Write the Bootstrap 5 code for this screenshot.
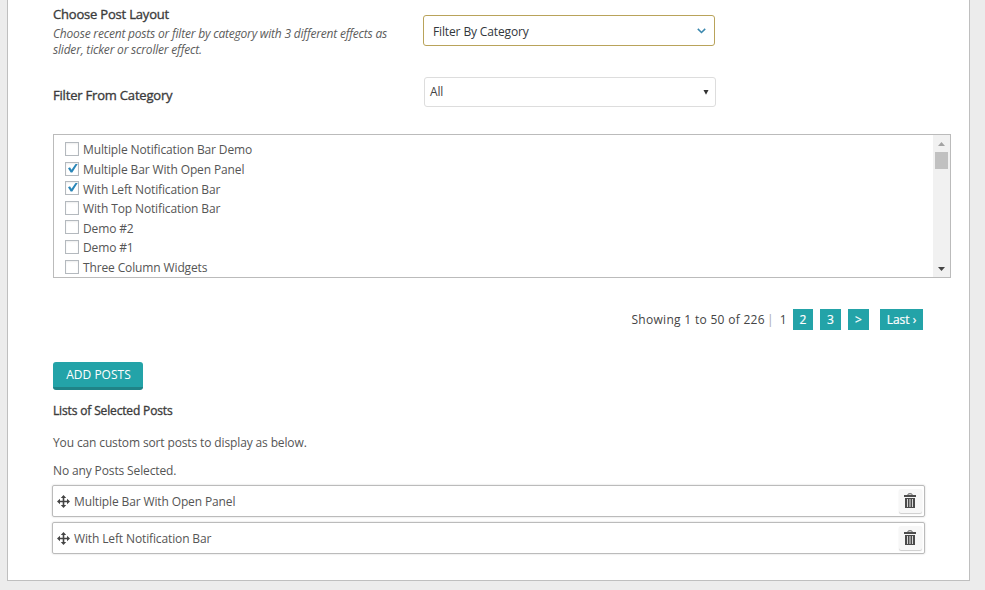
<!DOCTYPE html>
<html lang="en">
<head>
<meta charset="utf-8">
<meta name="viewport" content="width=device-width, initial-scale=1">
<title>Post settings</title>
<link href="https://cdn.jsdelivr.net/npm/bootstrap@5.3.0/dist/css/bootstrap.min.css" rel="stylesheet">
<style>
body{background:#ececec;font-family:"Open Sans",sans-serif;font-size:12px;line-height:20px;letter-spacing:-.13px;color:#555;overflow:hidden}
.panel{width:963px;height:581px;margin-left:7px;background:#fff;border:1px solid #bfbfbf;border-top:0;padding:0 18px 0 45px}
.field{width:370px}
.heading{font-size:13px;line-height:20px;letter-spacing:-.19px;color:#3c3c3c;-webkit-text-stroke:.35px #3c3c3c}
.heading-sm{font-size:12px;letter-spacing:-.15px;margin-top:11px}
.hint{font-size:12px;line-height:16px;letter-spacing:-.2px;font-style:italic;color:#5c5c5c;width:345px;margin-top:2px}
.row-layout{height:77px;padding-top:4px}
.row-filter{height:57px}
.pick{width:292px;border-radius:3px;background:#fff}
.pick-gold{height:31px;margin-top:11px;border:1px solid #b9a35a;padding:0 8px 0 9px;color:#32373c}
.pick-gold span{padding-top:3px}
.pick-grey{height:30px;margin-left:1px;border:1px solid #ddd;padding:0 6px 0 5px;color:#444}
.post-box{width:898px;height:144px;border:1px solid #bbb}
.post-list{padding:5.400px 0 0 11px}
.post-item{height:19.6px;line-height:19.6px}
.tick{width:14px;height:14px;margin:1.600px 4px 0 0;border:1px solid #b4b9be;box-shadow:inset 0 1px 2px rgba(0,0,0,.07)}
.scroller{width:17px;background:#f1f1f1;padding:7px 0 6px}
.thumb{width:13px;height:17px;background:#c1c1c1;margin-top:6px}
.pager{height:21px;margin-top:31px;padding-right:28px;line-height:21px;color:#444;letter-spacing:.3px}
.sep{margin-left:2px;color:#aaa}
.now{margin:0 6px}
.pg{width:21px;margin-right:7px;background:#23a3a8;color:#fff;text-align:center;letter-spacing:0;-webkit-text-stroke:.2px #fff}
.pg-two{width:20px}
.pg-next{margin-right:11px}
.pg-last{width:43px;margin-right:0}
.add{height:28px;width:90px;margin-top:32px;padding:0 0 0 1px;border:0;border-bottom:3px solid #1f8387;border-radius:3px;background:#23a3a8;color:#fff;font-size:12px;line-height:24px}
.note{margin-top:12px}
.empty-note{margin:8px 0 4px}
.sorted{width:873px;height:32px;margin:0 0 5px -1px;border:1px solid #bbb;border-radius:2px;box-shadow:0 0 2px rgba(0,0,0,.2);padding:0 2px 0 4px}
.sorted-name{padding-top:2px}
.bin{width:23px;height:24px;padding:0 1px 1px 0;background:#f7f7f7;border-radius:2px;box-shadow:0 1px 1px #ccc}
</style>
<script src="https://cdn.jsdelivr.net/npm/bootstrap@5.3.0/dist/js/bootstrap.bundle.min.js"></script>
</head>
<body>
<svg class="d-none">
  <symbol id="check" viewBox="0 0 12 12"><path d="M2 5.200 4 4.300 5.500 6.800 9.500 1 11.700 1 6.300 9.500H4.700Z" fill="#2a86b8"/></symbol>
  <symbol id="move" viewBox="0 0 13 13"><path d="M6.500 0 9.200 3H7.300V5.700H10V3.800L13 6.500 10 9.200V7.300H7.300V10H9.200L6.500 13 3.800 10H5.700V7.300H3V9.200L0 6.500 3 3.800V5.700H5.700V3H3.800Z" fill="#444"/></symbol>
  <symbol id="trash" viewBox="0 0 12 15"><path d="M4 2V1.500Q4 .8 4.700 .8H7.300Q8 .8 8 1.500V2" fill="none" stroke="#555"/><path d="M0 2H12V4H0Z" fill="#4c4c4c"/><path d="M1 5H11V15H1Z" fill="#4a4a4a"/><path d="M3.500 6V14M8.500 6V14" stroke="#d8d8d8"/><path d="M6 6V14" stroke="#999" stroke-width="2"/></symbol>
</svg>
<main class="panel">
  <div class="row-layout d-flex">
    <div class="field">
      <div class="heading">Choose Post Layout</div>
      <div class="hint">Choose recent posts or filter by category with 3 different effects as slider, ticker or scroller effect.</div>
    </div>
    <div class="pick pick-gold d-flex align-items-center justify-content-between">
      <span>Filter By Category</span>
      <svg width="9" height="6" viewBox="0 0 9 6"><path d="M.8 .9 4.500 4.500 8.200 .9" fill="none" stroke="#3a87ad" stroke-width="1.500"/></svg>
    </div>
  </div>
  <div class="row-filter d-flex">
    <div class="field"><div class="heading mt-2">Filter From Category</div></div>
    <div class="pick pick-grey d-flex align-items-center justify-content-between">
      <span>All</span>
      <svg width="6" height="6" viewBox="0 0 6 6"><path d="M.5 1H5.500L3 5.800Z" fill="#333"/></svg>
    </div>
  </div>
  <div class="post-box d-flex justify-content-between overflow-hidden">
    <div class="post-list">
      <div class="post-item d-flex"><span class="tick"></span><span>Multiple Notification Bar Demo</span></div>
      <div class="post-item d-flex"><span class="tick d-flex"><svg width="12" height="12"><use href="#check"/></svg></span><span>Multiple Bar With Open Panel</span></div>
      <div class="post-item d-flex"><span class="tick d-flex"><svg width="12" height="12"><use href="#check"/></svg></span><span>With Left Notification Bar</span></div>
      <div class="post-item d-flex"><span class="tick"></span><span>With Top Notification Bar</span></div>
      <div class="post-item d-flex"><span class="tick"></span><span>Demo #2</span></div>
      <div class="post-item d-flex"><span class="tick"></span><span>Demo #1</span></div>
      <div class="post-item d-flex"><span class="tick"></span><span>Three Column Widgets</span></div>
    </div>
    <div class="scroller d-flex flex-column align-items-center">
      <svg width="7" height="4"><path d="M0 4 3.500 0 7 4Z" fill="#a3a3a3"/></svg>
      <div class="thumb"></div>
      <svg class="mt-auto" width="7" height="4"><path d="M0 0H7L3.500 4Z" fill="#444"/></svg>
    </div>
  </div>
  <div class="pager d-flex justify-content-end">
    <span>Showing 1 to 50 of 226</span><span class="sep">|</span><span class="now">1</span>
    <span class="pg pg-two">2</span><span class="pg">3</span><span class="pg pg-next">&gt;</span><span class="pg pg-last">Last ›</span>
  </div>
  <button class="add btn d-block" type="button">ADD POSTS</button>
  <div class="heading heading-sm">Lists of Selected Posts</div>
  <div class="note">You can custom sort posts to display as below.</div>
  <div class="empty-note">No any Posts Selected.</div>
  <div class="sorted d-flex align-items-center"><svg width="13" height="13"><use href="#move"/></svg><span class="sorted-name ms-1 me-auto">Multiple Bar With Open Panel</span><span class="bin d-flex align-items-center justify-content-center"><svg width="12" height="15"><use href="#trash"/></svg></span></div>
  <div class="sorted d-flex align-items-center"><svg width="13" height="13"><use href="#move"/></svg><span class="sorted-name ms-1 me-auto">With Left Notification Bar</span><span class="bin d-flex align-items-center justify-content-center"><svg width="12" height="15"><use href="#trash"/></svg></span></div>
</main>
</body>
</html>
